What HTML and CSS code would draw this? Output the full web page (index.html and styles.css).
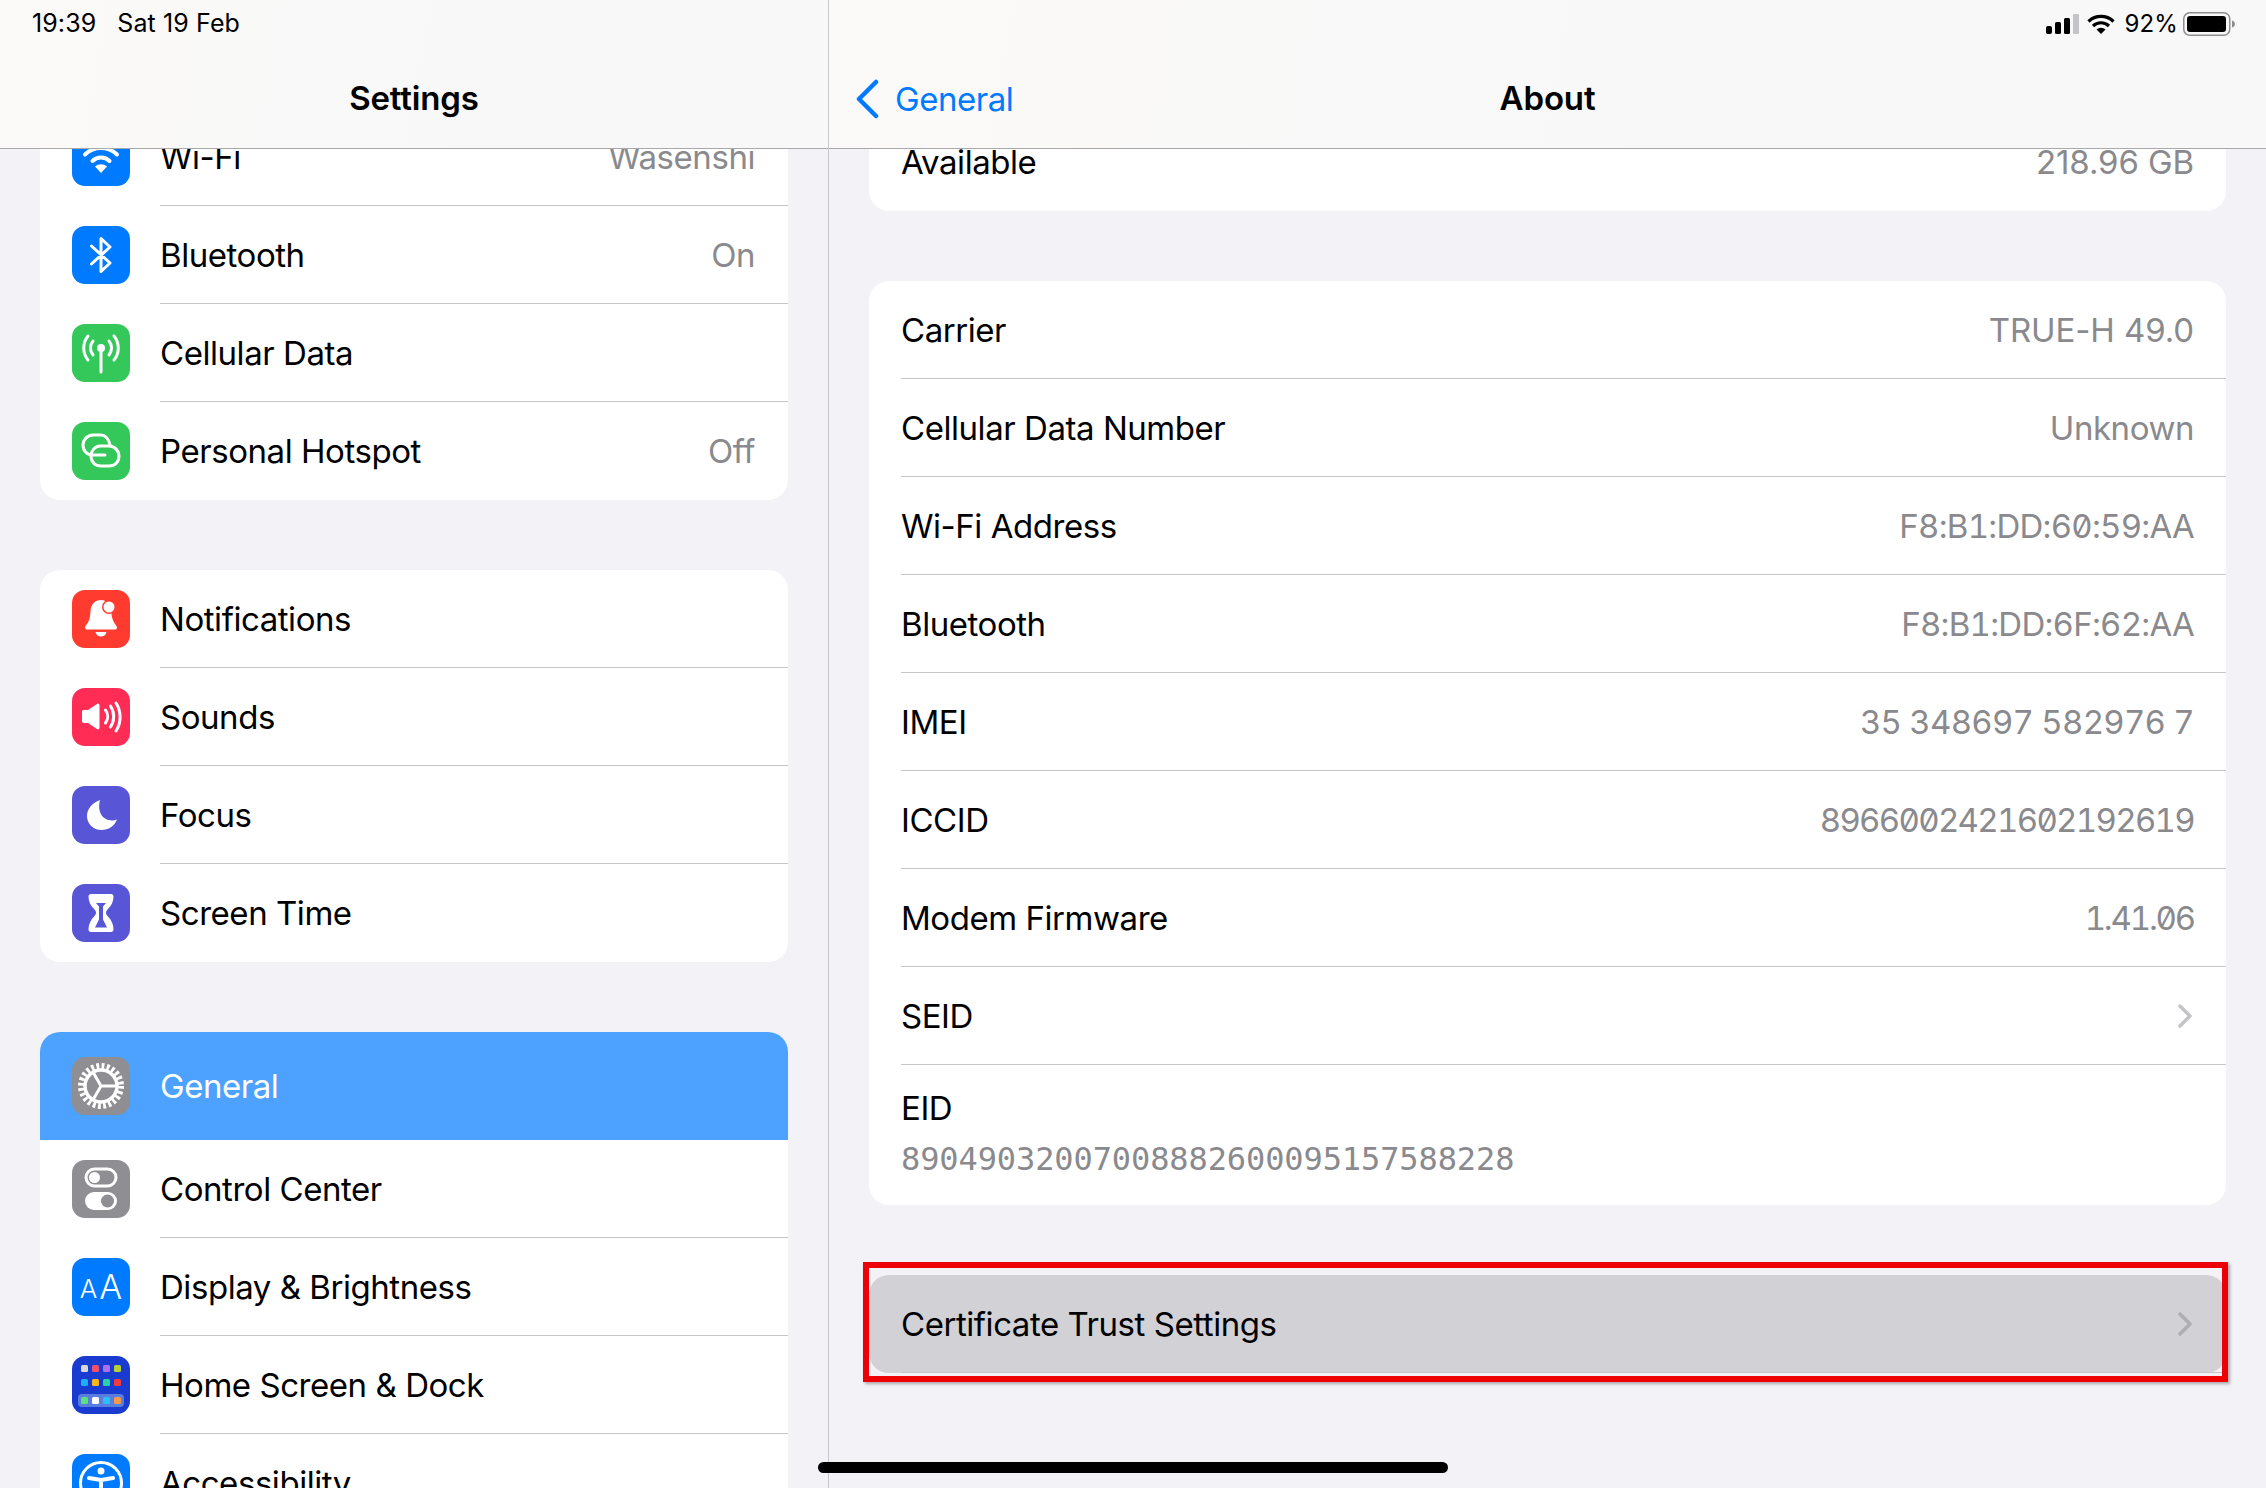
FILE: index.html
```html
<!DOCTYPE html>
<html lang="en">
<head>
  <meta charset="utf-8">
  <meta name="viewport" content="width=device-width, initial-scale=1">
  <title>About</title>
  <link rel="stylesheet" href="styles.css">
</head>
<body>
  <div class="ipad">
    <aside class="pane sidebar">
      <header class="navbar">
        <div class="status">
          <span class="clock">19:39</span>
          <span>Sat 19 Feb</span>
        </div>
        <div class="nav-title"><h1>Settings</h1></div>
      </header>

      <div class="scroll">
        <section class="card">
          <div class="row">
            <span class="icon blue">
              <svg viewBox="0 0 58 58"><path class="line" d="M5 19a34 34 0 0 1 48 0M13 26.500a23 23 0 0 1 32 0M20.500 33a12 12 0 0 1 17 0"/><path class="fill" d="M29 45l-6-6.500a9 9 0 0 1 12 0z"/></svg>
            </span>
            <div class="row-body"><span>Wi-Fi</span><span class="value">Wasenshi</span></div>
          </div>
          <div class="row">
            <span class="icon blue">
              <svg viewBox="0 0 58 58"><path class="line thin" d="M19.500 20L38 37 29 45.500V12.500L38 21 19.500 38"/></svg>
            </span>
            <div class="row-body"><span>Bluetooth</span><span class="value">On</span></div>
          </div>
          <div class="row">
            <span class="icon green">
              <svg viewBox="0 0 58 58"><circle class="fill" cx="29" cy="24" r="4"/><path class="line thin" d="M29 25v23M21 17a11 11 0 0 0 0 14M37 17a11 11 0 0 1 0 14M16 12a19 19 0 0 0 0 24M42 12a19 19 0 0 1 0 24"/></svg>
            </span>
            <div class="row-body"><span>Cellular Data</span></div>
          </div>
          <div class="row">
            <span class="icon green">
              <svg viewBox="0 0 58 58"><path class="line thin" d="M28 24H37C43 24 47 29 47 34 47 40 43 44 37 44H29C23 44 19 40 19 34 19 29 23 24 28 24Z"/><path class="line thin" d="M38 23C37 17 33 13 29 13H21C15 13 11 18 11 23 11 29 15 33 21 33H33"/></svg>
            </span>
            <div class="row-body"><span>Personal Hotspot</span><span class="value">Off</span></div>
          </div>
        </section>

        <section class="card">
          <div class="row">
            <span class="icon red">
              <svg viewBox="0 0 58 58"><path class="fill" d="M29 10c-7 0-10 5-10.500 11-.5 8-1.500 11-5 15-1 1.500-.5 3.500 1.500 3.500h28c2 0 2.500-2 1.500-3.500-3-3.500-4.500-7-5-12-.5-7-3.500-14-10.500-14zM23.500 42h11c-.5 3-3 4.500-5.500 4.500s-5-1.500-5.500-4.500z"/><circle cx="37" cy="17" r="7" fill="#ff3b30"/><circle class="fill" cx="37" cy="17" r="5.500"/></svg>
            </span>
            <div class="row-body"><span>Notifications</span></div>
          </div>
          <div class="row">
            <span class="icon pink">
              <svg viewBox="0 0 58 58"><path class="fill" d="M12 22h4l9-6c1.500-1 2.500 0 2.500 1.500v22c0 1.500-1 2.500-2.500 1.500l-9-6h-4c-1.500 0-2-1-2-2V24c0-1.500.5-2 2-2z"/><path class="line thin" d="M33.500 22a11 11 0 0 1 0 13M38.500 18a19 19 0 0 1 0 21M44 15a26 26 0 0 1 0 28"/></svg>
            </span>
            <div class="row-body"><span>Sounds</span></div>
          </div>
          <div class="row">
            <span class="icon indigo">
              <svg viewBox="0 0 58 58"><path class="fill" d="M28 14C20 17 15 23 15 30c0 8 6.500 14 14.500 14 7 0 13-4 15.500-10.500C35 37 24 30 28 14z"/></svg>
            </span>
            <div class="row-body"><span>Focus</span></div>
          </div>
          <div class="row">
            <span class="icon indigo">
              <svg viewBox="0 0 58 58"><path class="fill" d="M19 10h20c1.500 0 2.500 1 2.500 2.500 0 5-2 9-6 13-2 2-2 4.500 0 6.500 4 4 6 8.500 6 13.500 0 1.500-1 2.500-2.500 2.500H19c-1.500 0-2.500-1-2.500-2.500 0-5 2-9.500 6-13.500 2-2 2-4.500 0-6.500-4-4-6-8-6-13 0-1.500 1-2.500 2.500-2.500z"/><path fill="#5856d6" d="M24 19h10l-3 3.500v13l4 8H23l4-8v-13z"/></svg>
            </span>
            <div class="row-body"><span>Screen Time</span></div>
          </div>
        </section>

        <section class="card">
          <div class="row selected">
            <span class="icon gray">
              <svg viewBox="0 0 58 58"><circle class="gear-teeth" cx="29" cy="29" r="20"/><circle class="line gear-ring" cx="29" cy="29" r="16"/><path class="line thin" d="M29 29H44M29 29L21.500 16M29 29L21.500 42"/></svg>
            </span>
            <div class="row-body"><span>General</span></div>
          </div>
          <div class="row">
            <span class="icon gray">
              <svg viewBox="0 0 58 58"><rect class="line thin" x="14" y="9" width="30" height="17" rx="8.500"/><circle class="fill" cx="22.500" cy="17.500" r="5.500"/><rect class="fill" x="13" y="32" width="32" height="18" rx="9"/><circle cx="35.500" cy="41" r="6.500" fill="#8e8e93"/></svg>
            </span>
            <div class="row-body"><span>Control Center</span></div>
          </div>
          <div class="row">
            <span class="icon blue aa">
              <span class="aa-small">A</span><span class="aa-big">A</span>
            </span>
            <div class="row-body"><span>Display &amp; Brightness</span></div>
          </div>
          <div class="row">
            <span class="icon navy">
              <svg viewBox="0 0 58 58">
                <rect x="9" y="9" width="7" height="7" rx="1.500" fill="#d8d8d8"/><rect x="20" y="9" width="7" height="7" rx="1.500" fill="#f0506e"/><rect x="31" y="9" width="7" height="7" rx="1.500" fill="#b06ef5"/><rect x="42" y="9" width="7" height="7" rx="1.500" fill="#b4d235"/>
                <rect x="9" y="23" width="7" height="7" rx="1.500" fill="#1eaef5"/><rect x="20" y="23" width="7" height="7" rx="1.500" fill="#f5b91e"/><rect x="31" y="23" width="7" height="7" rx="1.500" fill="#2ad2a0"/><rect x="42" y="23" width="7" height="7" rx="1.500" fill="#f03c3c"/>
                <rect x="6" y="38" width="46" height="13" rx="4" fill="#5a7ee0"/>
                <rect x="9" y="41" width="7" height="7" rx="1.500" fill="#5ee07a"/><rect x="20" y="41" width="7" height="7" rx="1.500" fill="#fff"/><rect x="31" y="41" width="7" height="7" rx="1.500" fill="#2ac0f5"/><rect x="42" y="41" width="7" height="7" rx="1.500" fill="#f59a46"/>
              </svg>
            </span>
            <div class="row-body"><span>Home Screen &amp; Dock</span></div>
          </div>
          <div class="row">
            <span class="icon blue">
              <svg viewBox="0 0 58 58"><circle class="line thin" cx="29" cy="29" r="20.500"/><circle class="fill" cx="29" cy="17" r="3.500"/><path class="line" d="M17 24l12 2 12-2M29 26v9M29 35l-4 11M29 35l4 11"/></svg>
            </span>
            <div class="row-body"><span>Accessibility</span></div>
          </div>
        </section>
      </div>
    </aside>

    <main class="pane detail">
      <header class="navbar">
        <div class="status status-right">
          <svg class="signal" viewBox="0 0 33 20"><rect x="0" y="12" width="6" height="8" rx="2"/><rect x="9" y="8" width="6" height="12" rx="1.500"/><rect x="18" y="4" width="6" height="16" rx="1.500"/><rect x="27" y="0" width="6" height="20" rx="1" fill="#c4c4c6"/></svg>
          <svg class="wifi" viewBox="0 0 28 20"><path fill="none" stroke="#000" stroke-width="3.200" d="M1.500 7.500a18 18 0 0 1 25 0M6 12a11.500 11.500 0 0 1 16 0"/><path d="M14 20l-4.500-4.500a6.500 6.500 0 0 1 9 0z"/></svg>
          <span>92%</span>
          <svg class="battery" viewBox="0 0 53 24"><rect x=".750" y=".750" width="46" height="22.500" rx="6" fill="none" stroke="#8e8e8e" stroke-width="1.500"/><rect x="4" y="4" width="39" height="16" rx="3"/><path d="M49 8.500c2 .5 3 2 3 3.500s-1 3-3 3.500z" fill="#8e8e8e"/></svg>
        </div>
        <div class="nav-title">
          <a class="back">
            <svg viewBox="0 0 24 40"><path d="M21 3L4 20l17 17" fill="none" stroke="#007aff" stroke-width="4.500" stroke-linecap="round" stroke-linejoin="round"/></svg>
            General
          </a>
          <h1>About</h1>
        </div>
      </header>

      <div class="scroll scroll-detail">
        <section class="card">
          <div class="row"><div class="row-body"><span>Available</span><span class="value wide">218.96 GB</span></div></div>
        </section>

        <section class="card">
          <div class="row"><div class="row-body"><span>Carrier</span><span class="value wide">TRUE-H 49.0</span></div></div>
          <div class="row"><div class="row-body"><span>Cellular Data Number</span><span class="value">Unknown</span></div></div>
          <div class="row"><div class="row-body"><span>Wi-Fi Address</span><span class="value digits">F8:B1:DD:60:59:AA</span></div></div>
          <div class="row"><div class="row-body"><span>Bluetooth</span><span class="value digits">F8:B1:DD:6F:62:AA</span></div></div>
          <div class="row"><div class="row-body"><span>IMEI</span><span class="value digits">35 348697 582976 7</span></div></div>
          <div class="row"><div class="row-body"><span>ICCID</span><span class="value digits tight">8966002421602192619</span></div></div>
          <div class="row"><div class="row-body"><span>Modem Firmware</span><span class="value digits tighter">1.41.06</span></div></div>
          <div class="row"><div class="row-body"><span>SEID</span><svg class="chevron" viewBox="0 0 14 24"><path d="M2 2l10 10L2 22"/></svg></div></div>
          <div class="row row-tall">
            <div class="row-body">
              <span>EID</span>
              <span class="value mono">89049032007008882600095157588228</span>
            </div>
          </div>
        </section>

        <section class="card card-pressed">
          <div class="row"><div class="row-body"><span>Certificate Trust Settings</span><svg class="chevron" viewBox="0 0 14 24"><path d="M2 2l10 10L2 22"/></svg></div></div>
          <div class="callout"></div>
        </section>
      </div>
    </main>

    <div class="home-bar"></div>
  </div>
</body>
</html>
```

FILE: styles.css
```css
* {
  box-sizing: border-box;
}
body {
  margin: 0;
  background: #f2f2f7;
  color: #000;
  font-family: Inter, "Liberation Sans", sans-serif;
  font-size: 33px;
  letter-spacing: -0.45px;
}
h1 {
  margin: 0;
  font-size: 33px;
  font-weight: 600;
  letter-spacing: -0.15px;
}
.ipad {
  position: relative;
  display: flex;
  width: 2266px;
  height: 1488px;
  overflow: hidden;
}
.pane {
  position: relative;
  overflow: hidden;
}
.sidebar {
  width: 829px;
  border-right: 1px solid #c8c8cc;
}
.detail {
  flex: 1;
}

/* bar sits over the scrolled list */
.navbar {
  position: absolute;
  z-index: 2;
  top: 0;
  left: 0;
  right: 0;
  height: 149px;
  border-bottom: 1px solid #a9a9ab;
  background: linear-gradient(100deg, #fbfaf8, #f8f8f9 60%);
}
.status {
  display: flex;
  gap: 21px;
  height: 47px;
  padding: 8px 0 0 32px;
  font-size: 25px;
  letter-spacing: 0.1px;
}
.status-right {
  justify-content: flex-end;
  align-items: center;
  gap: 8px;
  padding: 0 30px 0 0;
  font-size: 24px;
}
.signal {
  width: 33px;
  height: 20px;
}
.wifi {
  width: 28px;
  height: 20px;
  margin-right: 2px;
}
.battery {
  width: 53px;
  height: 24px;
  margin-left: -3px;
}
.nav-title {
  position: relative;
  display: flex;
  justify-content: center;
  align-items: center;
  height: 102px;
}
.back {
  position: absolute;
  left: 26px;
  top: 32px;
  display: flex;
  align-items: center;
  gap: 16px;
  color: #007aff;
}
.back svg {
  width: 24px;
  height: 40px;
}

.scroll {
  display: flex;
  flex-direction: column;
  gap: 70px;
  padding: 108px 40px 0;
}
.scroll-detail {
  padding-top: 113px;
}
.card {
  position: relative;
  border-radius: 20px;
  background: #fff;
}
.row {
  display: flex;
  align-items: center;
  gap: 30px;
  height: 98px;
  padding-left: 32px;
}
.row-body {
  flex: 1;
  display: flex;
  justify-content: space-between;
  align-items: center;
  height: 100%;
  padding-right: 33px;
  border-bottom: 1px solid #c6c6c8;
}
.row:last-child .row-body {
  border-bottom: none;
}
.detail .row-body {
  padding-right: 32px;
}
.value {
  color: #8a8a8e;
}
.wide {
  letter-spacing: -0.1px;
}
/* the addresses and serials use fixed-width digits with a slashed zero */
.digits {
  font-feature-settings: "tnum", "zero";
  letter-spacing: -0.75px;
}
.tight {
  letter-spacing: -1.7px;
}
.tighter {
  letter-spacing: -2.2px;
}
.mono {
  font-family: "DejaVu Sans Mono", monospace;
  font-size: 32px;
  letter-spacing: -0.1px;
}
.row-tall {
  height: 140px;
}
.row-tall .row-body {
  flex-direction: column;
  align-items: flex-start;
  justify-content: flex-start;
  gap: 12px;
  padding-top: 23px;
}
.chevron {
  width: 14px;
  height: 24px;
  margin-right: 2px;
  fill: none;
  stroke: #c4c4c7;
  stroke-width: 3.500;
  stroke-linecap: round;
  stroke-linejoin: round;
}

.selected {
  height: 108px;
  border-radius: 20px 20px 0 0;
  background: #4da2ff;
  color: #fff;
}
.selected .row-body {
  border-bottom: none;
}

.card-pressed {
  background: #d1d1d6;
}
.card-pressed .chevron {
  stroke: #aeaeb2;
}
.callout {
  position: absolute;
  top: -13px;
  left: -6px;
  right: -2px;
  bottom: -9px;
  border: 6px solid #ee0007;
  box-shadow: 2px 2px 3px rgba(0, 0, 0, 0.3);
}

.icon {
  flex: none;
  display: block;
  width: 58px;
  height: 58px;
  border-radius: 13px;
}
.icon svg {
  display: block;
  width: 58px;
  height: 58px;
}
.fill {
  fill: #fff;
}
.line {
  fill: none;
  stroke: #fff;
  stroke-width: 4;
  stroke-linecap: round;
  stroke-linejoin: round;
}
.thin {
  stroke-width: 3;
}
.gear-teeth {
  fill: none;
  stroke: #fff;
  stroke-width: 6;
  stroke-dasharray: 2.800 2.436;
}
.gear-ring {
  stroke-width: 3.500;
}
.blue { background: #007aff; }
.green { background: #34c759; }
.red { background: #ff3b30; }
.pink { background: #ff2d55; }
.indigo { background: #5856d6; }
.gray { background: #8e8e93; }
.navy { background: #1a3bd0; }

.aa {
  display: flex;
  justify-content: center;
  align-items: center;
  gap: 2px;
  color: #fff;
  font-weight: 300;
  letter-spacing: 0;
  line-height: 1;
}
.aa-small {
  font-size: 26px;
  padding-top: 4px;
}
.aa-big {
  font-size: 34px;
}

.home-bar {
  position: absolute;
  z-index: 3;
  bottom: 15px;
  left: 818px;
  width: 630px;
  height: 11px;
  border-radius: 6px;
  background: #000;
}
```
